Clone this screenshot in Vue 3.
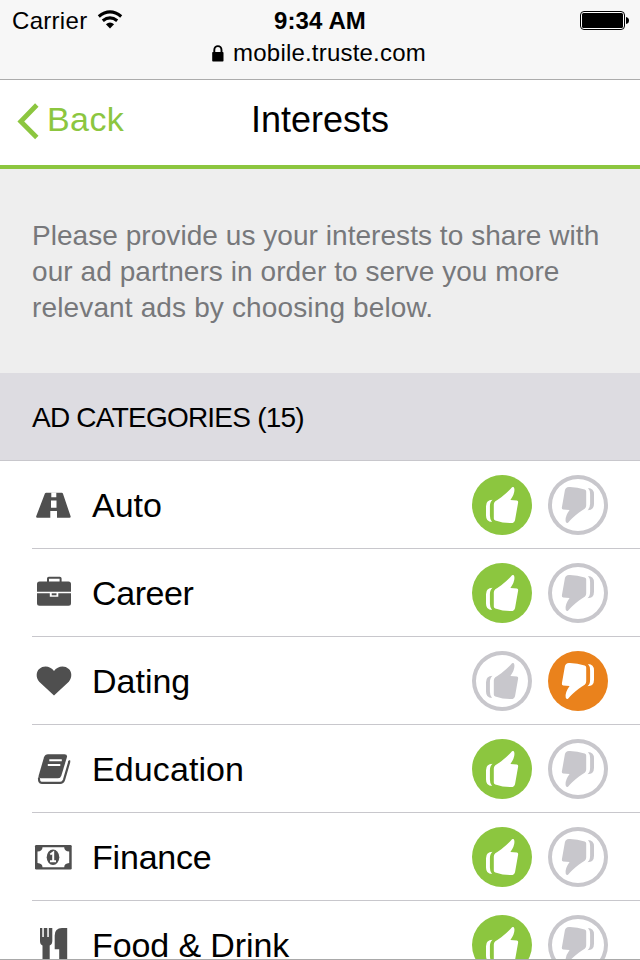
<script setup>
import { ref } from 'vue'

const categories = ref([
  { name: 'Auto', icon: 'auto', choice: 'like' },
  { name: 'Career', icon: 'career', choice: 'like' },
  { name: 'Dating', icon: 'dating', choice: 'dislike' },
  { name: 'Education', icon: 'education', choice: 'like' },
  { name: 'Finance', icon: 'finance', choice: 'like' },
  { name: 'Food & Drink', icon: 'food', choice: 'like' }
])
const total = 15
</script>

<template>
  <div class="screen">
    <header class="status">
      <div class="status-row">
        <div class="carrier">
          <span>Carrier</span>
          <svg class="wifi" width="26" height="20" viewBox="0 0 26 20">
            <path d="M1.800 6.500Q13 -2.600 24.200 6.500" fill="none" stroke="#000" stroke-width="3.200" />
            <path d="M5.800 10.800Q13 5 20.200 10.800" fill="none" stroke="#000" stroke-width="3.200" />
            <path d="M8.900 14.300Q13 10.600 17.100 14.300L13 18.600Z" />
          </svg>
        </div>
        <strong class="time">9:34 AM</strong>
        <svg class="battery" width="48" height="20" viewBox="0 0 48 20">
          <rect x="0.500" y="0.500" width="44" height="18" rx="3.500" fill="#fff" stroke="#000" />
          <rect x="2" y="2" width="41" height="15" rx="1.500" />
          <path d="M46 6q3 .5 3 3.500t-3 3.500z" />
        </svg>
      </div>
      <div class="address">
        <svg width="12" height="17" viewBox="0 0 12 17">
          <path d="M2.300 8V5a3.600 3.900 0 0 1 7.200 0v3" fill="none" stroke="#000" stroke-width="1.900" />
          <rect x="0.200" y="7" width="11.300" height="9.500" rx="0.800" />
        </svg>
        <span>mobile.truste.com</span>
      </div>
    </header>

    <nav class="nav">
      <a class="back">
        <svg width="24" height="38" viewBox="0 0 24 38">
          <path d="M20.800 3L4.800 19.500l16 16" fill="none" stroke="#8cc63f" stroke-width="4.800" />
        </svg>
        <span>Back</span>
      </a>
      <h1>Interests</h1>
    </nav>

    <section class="intro">
      <p>
        <span class="l1">Please provide us your interests to share with</span><br>
        <span class="l2">our ad partners in order to serve you more</span><br>
        <span class="l3">relevant ads by choosing below.</span>
      </p>
    </section>

    <h2 class="heading"><span>AD CATEGORIES ({{ total }})</span></h2>

    <ul class="list">
      <li v-for="item in categories" :key="item.name" class="row">
        <svg class="icon" width="44" height="44" viewBox="0 0 44 44">
          <g v-if="item.icon === 'auto'">
            <path d="M14.200 9.800h15.600q.8 0 1.100.8l7.700 22.700q.4 1.500-1.100 1.500H5.300q-1.500 0-1.100-1.500l8.700-22.700q.4-.8 1.300-.8z" />
            <path d="M19.300 9.500h5v4.700h-5zM19 17.500h5.500v7.300H19zM18.300 28h6.700v7h-6.700z" fill="#fff" />
          </g>
          <g v-else-if="item.icon === 'career'">
            <path d="M16 11V7.500q0-.8.8-.8h11q.8 0 .8.800V11" fill="none" stroke="#4f4f4f" stroke-width="2" />
            <path d="M7.500 10.500h29q2.500 0 2.500 2.500v7.700H5V13q0-2.500 2.500-2.500zM5 22.300h12.800v3.500h8.500v-3.500H39v10q0 2.500-2.500 2.500h-29Q5 34.800 5 32.300z" />
            <path d="M19.700 22.300h4.800v2h-4.800z" />
          </g>
          <path v-else-if="item.icon === 'dating'" d="M22 36.500L7.200 22.800C3.500 18.500 4.200 12.500 7.200 10 11.500 6 18.500 7 22 12c3.500-5 10.500-6 14.800-2 3 2.500 3.700 8.500 0 12.800z" />
          <g v-else-if="item.icon === 'education'">
            <path d="M16 7.300h16.500q3.200 0 2.400 3L29.300 28.700q-.8 2.500-3.300 2.500H9q-2.800 0-2.300-2.700L12 10.300q1-3 4-3z" />
            <path d="M37 13.500q.4 1 0 2.300L32 32.800q-1.100 3-3.800 3H9.800q-3.300 0-2.700-5.500" fill="none" stroke="#4f4f4f" stroke-width="2.200" />
            <path d="M17.300 13.300h12.500M15.800 18h12.500" stroke="#fff" stroke-width="2" />
          </g>
          <g v-else-if="item.icon === 'finance'">
            <rect x="3" y="10" width="36.700" height="24.400" rx="1.200" />
            <path d="M10.500 12.300h21.700q0 4 5 4.300v11.300q-5 .3-5 4.300H10.500q0-4-5-4.300V16.600q5-.3 5-4.300z" fill="#fff" />
            <ellipse cx="21" cy="22.200" rx="6.300" ry="7.800" />
            <path d="M18.300 19.500l2.900-2V26M18 26.300h6" fill="none" stroke="#fff" stroke-width="2" />
          </g>
          <g v-else>
            <path d="M8 5h2.300v9h1.500V5h3.500v9h1.500V5h3.500v13q0 3.500-2.600 4.500V39h-7.200V22.500Q8 21.500 8 18z" />
            <path d="M35.200 5v34h-8V26.300h-4.500V12.500Q22.700 5 30 5z" />
          </g>
        </svg>
        <span class="name" :class="item.icon">{{ item.name }}</span>
        <button class="thumb like" :class="{ on: item.choice === 'like' }" @click="item.choice = 'like'">
          <svg width="60" height="60" viewBox="0 0 60 60">
            <path d="M20.500 24.700q-6.500 0-6.500 6.500v9.300q0 6.500 6 6.500-2.100-2-2.100-6.500v-9.300q0-4.500 2.600-6.500z" />
            <path d="M40 12.300q1.900-.8 2.300 1.200.9 5-3.900 11.500l6.500.5q1.600.3 1.200 2.200l-3 17q-.6 3.300-4 3.400-8 .2-15.800-2.500-1.500-.6-1.500-2.200V29.500q0-2 1.500-3.200 2.500-1.500 6-4Q36.500 16.700 40 12.300z" />
          </svg>
        </button>
        <button class="thumb dislike" :class="{ on: item.choice === 'dislike' }" @click="item.choice = 'dislike'">
          <svg width="60" height="60" viewBox="0 0 60 60">
            <g transform="rotate(180 30 30)">
              <path d="M20.500 24.700q-6.500 0-6.500 6.500v9.300q0 6.500 6 6.500-2.100-2-2.100-6.500v-9.300q0-4.500 2.600-6.500z" />
              <path d="M40 12.300q1.900-.8 2.300 1.200.9 5-3.900 11.500l6.500.5q1.600.3 1.200 2.200l-3 17q-.6 3.300-4 3.400-8 .2-15.800-2.500-1.500-.6-1.500-2.200V29.500q0-2 1.500-3.200 2.500-1.500 6-4Q36.500 16.700 40 12.300z" />
            </g>
          </svg>
        </button>
      </li>
    </ul>
  </div>
</template>

<style>
body { margin: 0; overflow: hidden; }
</style>

<style scoped>
.screen {
  box-sizing: border-box;
  width: 640px;
  height: 960px;
  overflow: hidden;
  border-bottom: 1px solid #a9a9a9;
  background: #fff;
  color: #000;
  font-family: "Liberation Sans", Arial, sans-serif;
}

.status {
  box-sizing: border-box;
  height: 80px;
  padding: 6px 12px 0;
  background: #f7f7f7;
  border-bottom: 1px solid #acacac;
  font-size: 24px;
}
.status-row {
  display: grid;
  grid-template-columns: 1fr auto 1fr;
  height: 32px;
  line-height: 30px;
}
.carrier { display: flex; gap: 10px; letter-spacing: 0.3px; }
.wifi { margin-top: 4px; }
.time { font-weight: 700; letter-spacing: 0.1px; }
.battery { justify-self: end; margin-top: 5px; overflow: visible; }
.address {
  display: flex;
  justify-content: center;
  align-items: center;
  gap: 9px;
  height: 30px;
  padding-right: 2px;
  letter-spacing: 0.2px;
}

.nav {
  display: grid;
  grid-template-columns: 1fr auto 1fr;
  align-items: center;
  box-sizing: border-box;
  height: 89px;
  padding: 0 16px 6px;
  border-bottom: 4px solid #8cc63f;
}
.back {
  display: flex;
  align-items: center;
  gap: 7px;
  color: #8cc63f;
  font-size: 34px;
  letter-spacing: 0.4px;
}
.back svg { margin-top: 2px; }
h1 { margin: 0; font-size: 36px; font-weight: 400; }

.intro {
  box-sizing: border-box;
  height: 204px;
  padding: 49px 32px 0;
  background: #eee;
  color: #77787b;
}
.intro p { margin: 0; font-size: 28px; line-height: 36px; white-space: nowrap; }
.l1 { letter-spacing: 0.05px; }
.l2 { letter-spacing: 0.07px; }
.l3 { letter-spacing: 0.14px; }

.heading {
  box-sizing: border-box;
  height: 88px;
  margin: 0;
  padding: 1px 0 0 32px;
  background: #dddce1;
  border-bottom: 1px solid #c8c7cc;
  font-size: 28px;
  font-weight: 400;
  line-height: 88px;
  letter-spacing: -0.77px;
}

.list { margin: 0; padding: 0 0 0 32px; list-style: none; }
.row {
  display: flex;
  align-items: center;
  box-sizing: border-box;
  height: 88px;
  padding-right: 32px;
  border-bottom: 1px solid #c8c7cc;
}
.icon { fill: #4f4f4f; margin-right: 16px; }
.name { flex: 1; padding-top: 2px; font-size: 34px; }
.career { letter-spacing: -0.4px; }
.education { letter-spacing: 0.1px; }
.finance { letter-spacing: -0.2px; }
.food { letter-spacing: -0.1px; }

.thumb {
  box-sizing: border-box;
  width: 60px;
  height: 60px;
  padding: 0;
  border: 0;
  border-radius: 50%;
  background: #fff;
  box-shadow: inset 0 0 0 4px #c8c7cc;
  fill: #c8c7cc;
}
.thumb svg { display: block; }
.thumb + .thumb { margin-left: 16px; }
.thumb.on { box-shadow: none; fill: #fff; }
.like.on { background: #8cc63f; }
.dislike.on { background: #ea821c; }
</style>
